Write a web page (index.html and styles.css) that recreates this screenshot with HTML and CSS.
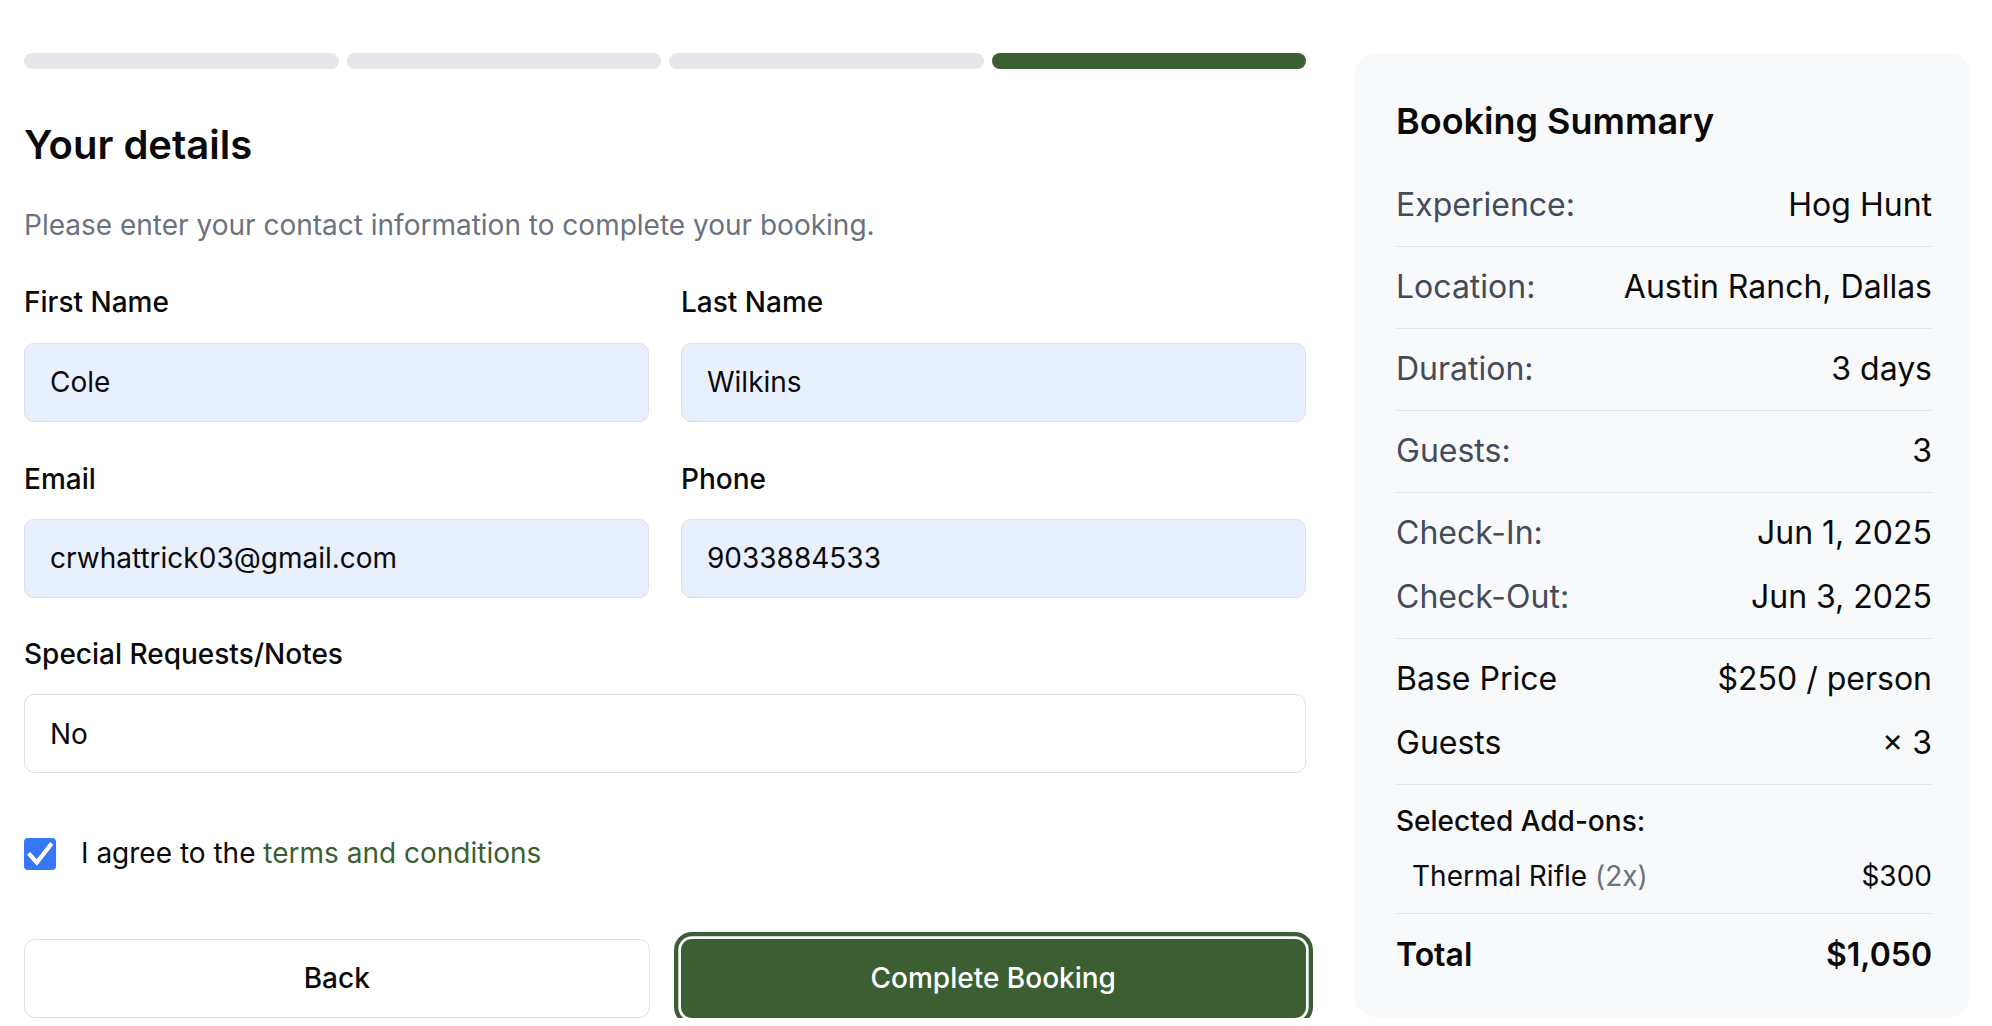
FILE: index.html
```html
<!DOCTYPE html>
<html lang="en">
<head>
<meta charset="utf-8">
<title>Your details</title>
<link rel="stylesheet" href="styles.css">
</head>
<body>
<div class="page">
  <main class="form-col">
    <div class="steps">
      <span class="step"></span>
      <span class="step"></span>
      <span class="step"></span>
      <span class="step active"></span>
    </div>
    <h1 class="title">Your details</h1>
    <p class="lead">Please enter your contact information to complete your booking.</p>

    <div class="grid2">
      <div class="field">
        <label class="label">First Name</label>
        <input class="input filled" type="text" value="Cole" readonly>
      </div>
      <div class="field">
        <label class="label">Last Name</label>
        <input class="input filled" type="text" value="Wilkins" readonly>
      </div>
      <div class="field">
        <label class="label">Email</label>
        <input class="input filled" type="text" value="crwhattrick03@gmail.com" readonly>
      </div>
      <div class="field">
        <label class="label">Phone</label>
        <input class="input filled" type="text" value="9033884533" readonly>
      </div>
    </div>

    <div class="field notes">
      <label class="label">Special Requests/Notes</label>
      <input class="input" type="text" value="No" readonly>
    </div>

    <div class="agree">
      <span class="check"><svg viewBox="0 0 32 32" width="32" height="32"><path d="M6 17 L12.8 24.5 L26.5 7" fill="none" stroke="#fff" stroke-width="4.2" stroke-linecap="square" stroke-linejoin="miter"/></svg></span>
      <span class="agree-text">I agree to the <a class="link" href="#">terms and conditions</a></span>
    </div>

    <div class="actions">
      <button class="btn btn-back" type="button">Back</button>
      <button class="btn btn-primary" type="button">Complete Booking</button>
    </div>
  </main>

  <aside class="summary">
    <h2 class="sum-title">Booking Summary</h2>
    <div class="row sep"><span class="key">Experience:</span><span class="val">Hog Hunt</span></div>
    <div class="row sep"><span class="key">Location:</span><span class="val">Austin Ranch, Dallas</span></div>
    <div class="row sep"><span class="key">Duration:</span><span class="val">3 days</span></div>
    <div class="row sep"><span class="key">Guests:</span><span class="val">3</span></div>
    <div class="group sep">
      <div class="line"><span class="key">Check-In:</span><span class="val">Jun 1, 2025</span></div>
      <div class="line"><span class="key">Check-Out:</span><span class="val">Jun 3, 2025</span></div>
    </div>
    <div class="group sep">
      <div class="line"><span class="dark">Base Price</span><span class="val">$250 / person</span></div>
      <div class="line"><span class="dark">Guests</span><span class="val">× 3</span></div>
    </div>
    <div class="addons sep">
      <div class="addons-title">Selected Add-ons:</div>
      <div class="addon"><span>Thermal Rifle <span class="muted">(2x)</span></span><span>$300</span></div>
    </div>
    <div class="total"><span>Total</span><span>$1,050</span></div>
  </aside>
</div>
</body>
</html>
```

FILE: styles.css
```css
* { box-sizing: border-box; }

html, body {
  margin: 0;
  padding: 0;
  background: #ffffff;
}

body {
  font-family: Inter, "Noto Sans", "Liberation Sans", sans-serif;
  color: #0a0a0a;
}

.page {
  display: flex;
  align-items: flex-start;
  gap: 49px;
  padding: 53px 22px 0 24px;
}

.form-col {
  flex: 1;
  min-width: 0;
}

.steps {
  display: flex;
  gap: 8px;
  margin-bottom: 52px;
}

.step {
  flex: 1;
  height: 16px;
  border-radius: 999px;
  background: #e5e7eb;
}

.step.active {
  background: #3b5f33;
}

.title {
  font-size: 40px;
  line-height: 48px;
  font-weight: 600;
  margin: 0 0 38px 0;
}

.lead {
  font-size: 28px;
  line-height: 37.33px;
  color: #6b7280;
  margin: 0 0 40px 0;
}

.grid2 {
  display: grid;
  grid-template-columns: 1fr 1fr;
  column-gap: 32px;
  row-gap: 39px;
}

.field {
  display: flex;
  flex-direction: column;
}

.notes {
  margin-top: 38px;
}

.label {
  font-size: 28px;
  line-height: 37.33px;
  font-weight: 500;
  margin-bottom: 21px;
}

.input {
  display: block;
  width: 100%;
  height: 79px;
  padding: 0 25px;
  font-family: inherit;
  font-size: 28px;
  color: #0a0a0a;
  background: #ffffff;
  border: 1.5px solid #e0e0e0;
  border-radius: 10px;
  outline: none;
}

.input.filled {
  background: #e8f0fe;
}

.agree {
  display: flex;
  align-items: center;
  margin-top: 62px;
  height: 37.33px;
}

.check {
  width: 32px;
  height: 32px;
  border-radius: 4px;
  background: #3478f6;
  display: inline-flex;
  flex: none;
}

.agree-text {
  margin-left: 25px;
  font-size: 28px;
  line-height: 37.33px;
}

.link {
  color: #3b5f33;
  text-decoration: none;
}

.actions {
  display: grid;
  grid-template-columns: 1fr 1fr;
  gap: 31px;
  margin-top: 66px;
}

.btn {
  height: 79px;
  font-family: inherit;
  font-size: 28px;
  font-weight: 500;
  border-radius: 11px;
  cursor: pointer;
}

.btn-back {
  background: #ffffff;
  color: #0a0a0a;
  border: 1.5px solid #e0e0e0;
}

.btn-primary {
  background: #3b5f33;
  color: #ffffff;
  border: none;
  box-shadow: 0 0 0 2.7px #ffffff, 0 0 0 7px #3b5f33;
}

/* summary */
.summary {
  flex: none;
  width: 615px;
  background: #f8f9fb;
  border-radius: 21px;
  padding: 45px 38px 40px 41px;
}

.sum-title {
  font-size: 36px;
  line-height: 46px;
  font-weight: 600;
  margin: 0 0 20.4px 0;
}

.row, .line, .total {
  display: flex;
  justify-content: space-between;
  align-items: center;
  font-size: 32px;
  line-height: 42.67px;
}

.row {
  padding: 19.3px 0;
}

.sep {
  border-bottom: 1.33px solid #e3e5e9;
}

.group {
  display: flex;
  flex-direction: column;
  gap: 21px;
  padding: 19px 0 19.3px 0;
}

.key {
  color: #444b59;
}

.dark, .val {
  color: #0a0a0a;
}

.addons {
  padding: 18.5px 0 18px 0;
}

.addons-title {
  font-size: 28px;
  line-height: 37.33px;
  font-weight: 500;
}

.addon {
  display: flex;
  justify-content: space-between;
  font-size: 28px;
  line-height: 37.33px;
  margin-top: 17px;
  padding-left: 16px;
}

.muted {
  color: #6b7280;
}

.total {
  padding-top: 20.5px;
  font-weight: 600;
}
```
